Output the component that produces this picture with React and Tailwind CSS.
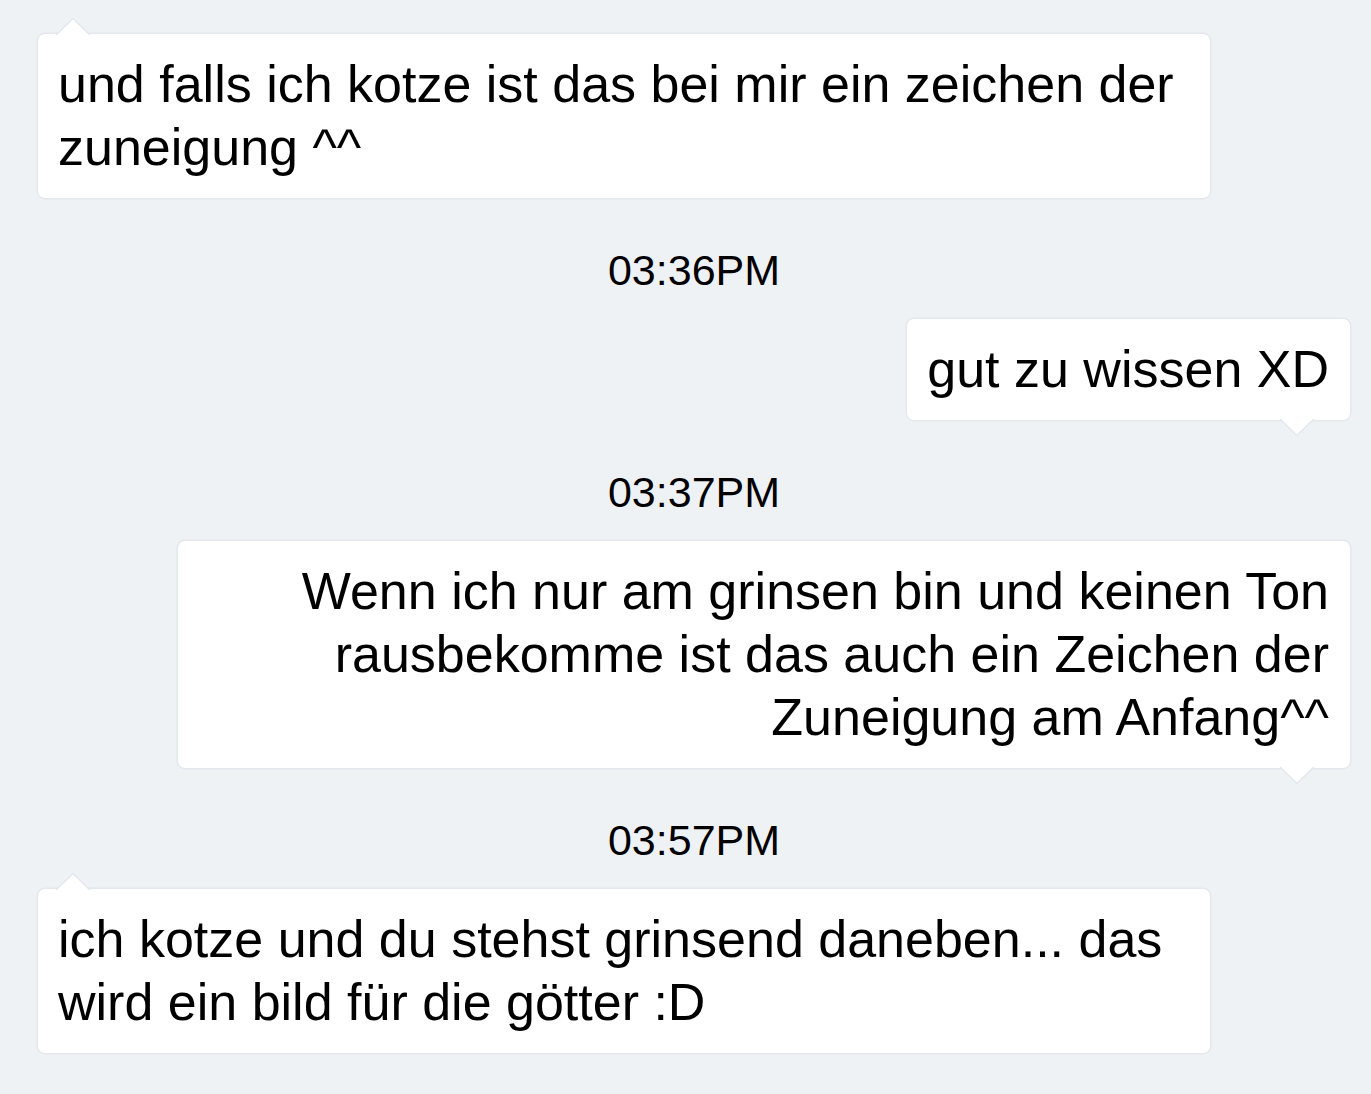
import React from 'react';

const messages = [
  { type: 'in', text: 'und falls ich kotze ist das bei mir ein zeichen der zuneigung ^^' },
  { type: 'time', text: '03:36PM' },
  { type: 'out', text: 'gut zu wissen XD' },
  { type: 'time', text: '03:37PM' },
  { type: 'out', text: 'Wenn ich nur am grinsen bin und keinen Ton rausbekomme ist das auch ein Zeichen der Zuneigung am Anfang^^' },
  { type: 'time', text: '03:57PM' },
  { type: 'in', text: 'ich kotze und du stehst grinsend daneben... das wird ein bild für die götter :D' },
];

// little speech-bubble arrow, drawn over the bubble edge
function Tail({ down }) {
  return (
    <svg
      width="34"
      height="17"
      viewBox="0 0 34 17"
      className={
        down
          ? 'absolute -bottom-[16px] right-[36px] rotate-180'
          : 'absolute -top-[16px] left-[18px]'
      }
      aria-hidden="true"
    >
      <polygon points="0,17.5 17,0.5 34,17.5" fill="#ffffff" />
      <polyline points="0,17 17,0.5 34,17" fill="none" stroke="#e3e8ee" strokeWidth="1.5" />
    </svg>
  );
}

function Bubble({ text, out }) {
  return (
    <div
      className={`relative max-w-[1172px] rounded-[7px] bg-white py-[19px] pl-[20px] pr-[21px] text-[52px] leading-[63px] text-black shadow-[0_0_0_1.5px_#e3e8ee] ${
        out ? 'self-end text-right' : 'self-start text-left'
      }`}
    >
      <Tail down={out} />
      <span className="relative">{text}</span>
    </div>
  );
}

export default function App() {
  return (
    <div
      className="min-h-[1094px] w-full bg-[#eff2f5] pt-[34px] pl-[38px] pr-[21px]"
      style={{ fontFamily: '"Liberation Sans", Arial, sans-serif' }}
    >
      <div className="flex flex-col">
        {messages.map((m, i) =>
          m.type === 'time' ? (
            <div
              key={i}
              className="mt-[47px] mb-[24px] text-center text-[43px] leading-[50px] text-black"
            >
              {m.text}
            </div>
          ) : (
            <Bubble key={i} text={m.text} out={m.type === 'out'} />
          )
        )}
      </div>
    </div>
  );
}
